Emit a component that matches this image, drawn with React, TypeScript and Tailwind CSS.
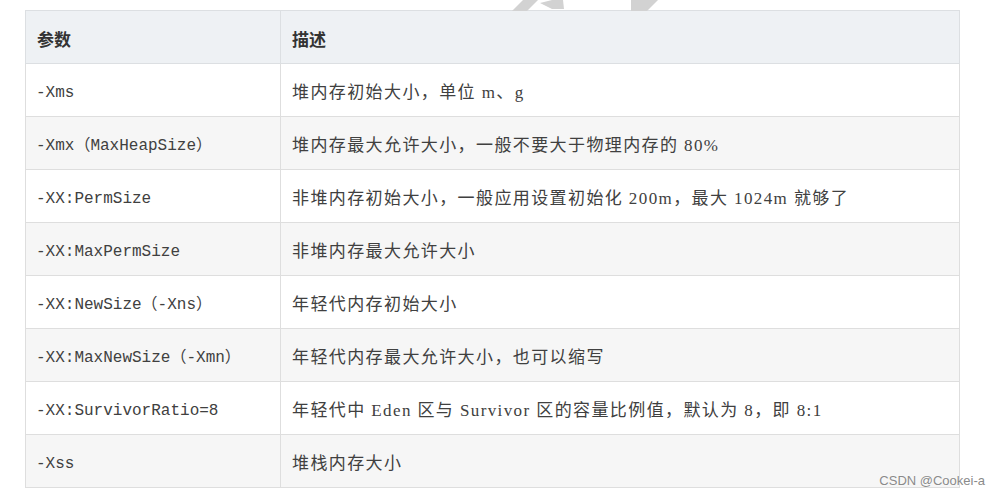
const rows: [string, string][] = [
  ['-Xms', '堆内存初始大小，单位 m、g'],
  ['-Xmx（MaxHeapSize）', '堆内存最大允许大小，一般不要大于物理内存的 80%'],
  ['-XX:PermSize', '非堆内存初始大小，一般应用设置初始化 200m，最大 1024m 就够了'],
  ['-XX:MaxPermSize', '非堆内存最大允许大小'],
  ['-XX:NewSize（-Xns）', '年轻代内存初始大小'],
  ['-XX:MaxNewSize（-Xmn）', '年轻代内存最大允许大小，也可以缩写'],
  ['-XX:SurvivorRatio=8', '年轻代中 Eden 区与 Survivor 区的容量比例值，默认为 8，即 8:1'],
  ['-Xss', '堆栈内存大小'],
]

export default function App() {
  return (
    <div className="relative w-[991px] h-[496px] bg-white overflow-hidden">
      {/* faint watermark shapes cut off at the top */}
      <svg className="absolute left-0 top-0" width="991" height="12" viewBox="0 0 991 12">
        <polygon points="512,11 527,11 538,0 523,0" fill="#d2d2d2" />
        <polygon points="540,3 552,0 563,0 564,9 552,9" fill="#d2d2d2" />
        <polygon points="631,0 658,0 647,11 631,11" fill="#d2d2d2" />
      </svg>

      <div className="pt-[10px] pl-[25px]">
        <table className="border-collapse w-[935px] text-[#404040]">
          <thead>
            <tr className="bg-[#eef1f4] h-[53px]">
              <th className="w-[255px] border border-[#dcdfe2] pl-[11px] pt-[3px] text-left font-bold text-[17px] text-[#333] font-['Noto_Sans_CJK_SC',sans-serif]">
                参数
              </th>
              <th className="border border-[#dcdfe2] pl-[11px] pt-[3px] text-left font-bold text-[17px] text-[#333] font-['Noto_Sans_CJK_SC',sans-serif]">
                描述
              </th>
            </tr>
          </thead>
          <tbody>
            {rows.map(([k, v], i) => (
              <tr key={k} className={`h-[53px] ${i % 2 === 1 ? 'bg-[#f6f6f6]' : 'bg-white'}`}>
                <td className="border border-[#dedede] pl-[10px] pt-[5px] text-[16px] font-['Liberation_Mono','Noto_Sans_CJK_SC',monospace] whitespace-nowrap">
                  {k}
                </td>
                <td className="border border-[#dedede] pl-[11px] pt-[5px] text-[17px] tracking-[1.4px] font-['Liberation_Serif','Noto_Sans_CJK_SC',serif] whitespace-nowrap">
                  {v}
                </td>
              </tr>
            ))}
          </tbody>
        </table>
      </div>

      <div className="absolute right-[6px] bottom-[9px] text-[13px] leading-none text-[#8a8a8a] font-['Liberation_Sans',sans-serif] [text-shadow:0_0_2px_#fff]">
        CSDN @Cookei-a
      </div>
    </div>
  )
}
